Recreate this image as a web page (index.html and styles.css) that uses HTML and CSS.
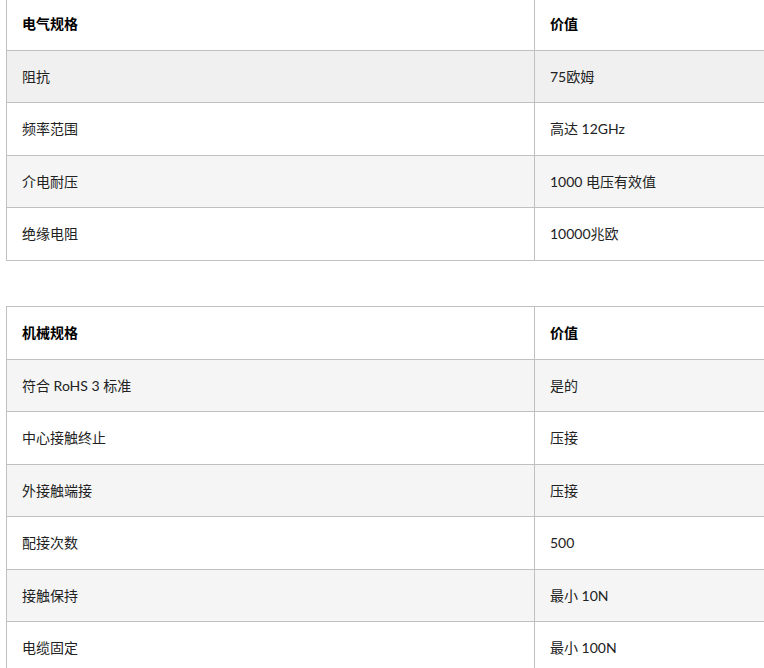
FILE: index.html
```html
<!DOCTYPE html>
<html lang="zh">
<head>
<meta charset="utf-8">
<link rel="stylesheet" href="styles.css">
</head>
<body>
<div class="page">
  <table class="spec">
    <thead>
      <tr><th>电气规格</th><th>价值</th></tr>
    </thead>
    <tbody>
      <tr class="hover"><td>阻抗</td><td>75欧姆</td></tr>
      <tr><td>频率范围</td><td>高达 12GHz</td></tr>
      <tr><td>介电耐压</td><td>1000 电压有效值</td></tr>
      <tr><td>绝缘电阻</td><td>10000兆欧</td></tr>
    </tbody>
  </table>
  <table class="spec">
    <thead>
      <tr><th>机械规格</th><th>价值</th></tr>
    </thead>
    <tbody>
      <tr><td>符合 RoHS 3 标准</td><td>是的</td></tr>
      <tr><td>中心接触终止</td><td>压接</td></tr>
      <tr><td>外接触端接</td><td>压接</td></tr>
      <tr><td>配接次数</td><td>500</td></tr>
      <tr><td>接触保持</td><td>最小 10N</td></tr>
      <tr><td>电缆固定</td><td>最小 100N</td></tr>
    </tbody>
  </table>
</div>
</body>
</html>
```

FILE: styles.css
```css
html, body {
  margin: 0;
  padding: 0;
  background: #fff;
  overflow: hidden;
}
.page {
  width: 1070px;
  margin-top: -3px;
  padding-left: 6px;
  font-family: "Lato", "Noto Sans CJK SC", sans-serif;
  font-size: 14px;
  color: #222;
}
.spec {
  width: 1056px;
  border-collapse: collapse;
  table-layout: fixed;
  margin-bottom: 45.5px;
}
.spec th, .spec td {
  border: 1px solid #c0c0c0;
  padding: 15px 15px 15px 15px;
  line-height: 21.5px;
  text-align: left;
  vertical-align: middle;
}
.spec th {
  font-weight: 700;
  color: #000;
}
.spec th:first-child, .spec td:first-child {
  width: 497px;
}
.spec tbody tr:nth-child(odd) {
  background: #f5f5f5;
}
.spec tbody tr.hover {
  background: #f0f0f0;
}
```
